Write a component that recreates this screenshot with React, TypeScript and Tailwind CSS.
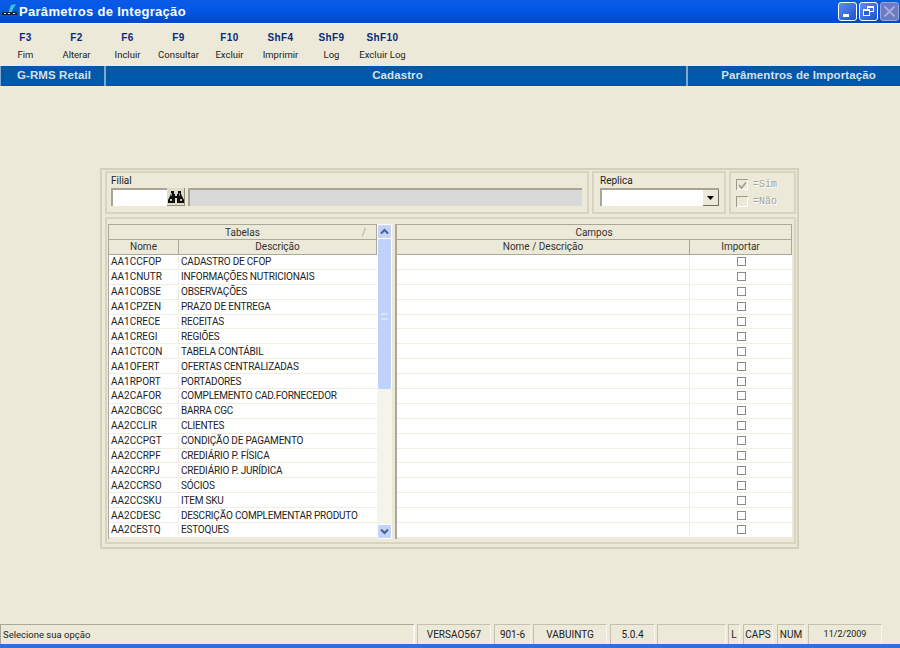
const sans = "font-['Roboto','Liberation_Sans',Arial,sans-serif]"

const keys = [
  ['F3', 'Fim'],
  ['F2', 'Alterar'],
  ['F6', 'Incluir'],
  ['F9', 'Consultar'],
  ['F10', 'Excluir'],
  ['ShF4', 'Imprimir'],
  ['ShF9', 'Log'],
  ['ShF10', 'Excluir Log'],
]

const rows = [
  ['AA1CCFOP', 'CADASTRO DE CFOP'],
  ['AA1CNUTR', 'INFORMAÇÕES NUTRICIONAIS'],
  ['AA1COBSE', 'OBSERVAÇÕES'],
  ['AA1CPZEN', 'PRAZO DE ENTREGA'],
  ['AA1CRECE', 'RECEITAS'],
  ['AA1CREGI', 'REGIÕES'],
  ['AA1CTCON', 'TABELA CONTÁBIL'],
  ['AA1OFERT', 'OFERTAS CENTRALIZADAS'],
  ['AA1RPORT', 'PORTADORES'],
  ['AA2CAFOR', 'COMPLEMENTO CAD.FORNECEDOR'],
  ['AA2CBCGC', 'BARRA CGC'],
  ['AA2CCLIR', 'CLIENTES'],
  ['AA2CCPGT', 'CONDIÇÃO DE PAGAMENTO'],
  ['AA2CCRPF', 'CREDIÁRIO P. FÍSICA'],
  ['AA2CCRPJ', 'CREDIÁRIO P. JURÍDICA'],
  ['AA2CCRSO', 'SÓCIOS'],
  ['AA2CCSKU', 'ITEM SKU'],
  ['AA2CDESC', 'DESCRIÇÃO COMPLEMENTAR PRODUTO'],
  ['AA2CESTQ', 'ESTOQUES'],
]

const statusCells: [string, string][] = [
  ['VERSAO567', 'w-[74px] ml-[2px]'],
  ['901-6', 'w-[37px] ml-[3px]'],
  ['VABUINTG', 'w-[74px] ml-[2px]'],
  ['5.0.4', 'w-[45px] ml-[3px]'],
  ['', 'w-[69px] ml-[2px]'],
  ['L', 'w-[12px] ml-[2px]'],
  ['CAPS', 'w-[30px] ml-[3px]'],
  ['NUM', 'w-[28px] ml-[4px]'],
  ['11/2/2009', 'w-[74px] ml-[3px] text-[9px]'],
]

function WinButton({ kind }: { kind: 'min' | 'max' | 'close' }) {
  if (kind === 'close') {
    return (
      <div className="w-[19px] h-[19px] rounded-[3px] border border-[#9aa6d8] bg-[#6f7bc0] flex items-center justify-center">
        <svg width="13" height="13" viewBox="0 0 13 13">
          <path d="M1.5 1.5l10 10M11.5 1.5l-10 10" stroke="#a4acd8" strokeWidth="2" />
        </svg>
      </div>
    )
  }
  return (
    <div className="w-[19px] h-[19px] rounded-[3px] border border-white bg-gradient-to-br from-[#5f8cf0] to-[#1f4fd0] flex items-center justify-center">
      {kind === 'min' ? (
        <svg width="13" height="13" viewBox="0 0 13 13">
          <rect x="2" y="9" width="6" height="3" fill="#fff" />
        </svg>
      ) : (
        <svg width="13" height="13" viewBox="0 0 13 13" fill="none" stroke="#fff">
          <rect x="5.5" y="1.5" width="6" height="5" />
          <path d="M5.5 2.5h6" />
          <rect x="1.5" y="4.5" width="6" height="6" fill="#2f5fd8" />
          <path d="M1.5 5.5h6" />
        </svg>
      )}
    </div>
  )
}

function Binoculars() {
  return (
    <svg width="16" height="14" viewBox="0 0 16 14">
      <path d="M3 1h3v3h1v2h2V4h1V1h3v3l1 2 2 4v3H9V8H7v5H0v-3l2-4 1-2z" fill="#111" />
      <rect x="3" y="3" width="1" height="3" fill="#8a8a80" />
      <rect x="11" y="3" width="1" height="3" fill="#8a8a80" />
      <rect x="2" y="9" width="2" height="2" fill="#c8c4b4" />
      <rect x="12" y="9" width="2" height="2" fill="#c8c4b4" />
    </svg>
  )
}

function ScrollButton({ up }: { up?: boolean }) {
  return (
    <div className="h-[15px] w-full rounded-[2px] border border-white bg-[#c3d3fb] flex items-center justify-center shrink-0">
      <svg width="9" height="7" viewBox="0 0 9 7" fill="none" stroke="#4d6185" strokeWidth="2">
        <path d={up ? 'M1 5.5l3.5-3.5 3.5 3.5' : 'M1 1.5l3.5 3.5 3.5-3.5'} />
      </svg>
    </div>
  )
}

function HeaderCell({ children, className = '' }: { children?: React.ReactNode; className?: string }) {
  return (
    <div className={`h-[15px] flex items-center justify-center bg-[#ece9d8] border-b border-r border-[#aca899] text-[10px] leading-none text-[#333] ${className}`}>
      {children}
    </div>
  )
}

function DisabledCheck({ checked, label }: { checked?: boolean; label: string }) {
  return (
    <div className="flex items-center gap-[5px]">
      <div className="w-[12px] h-[11px] border-l border-t border-[#9d9a8c] bg-[#ece9d8] shadow-[inset_-1px_-1px_0_#fff] flex items-center justify-center">
        {checked && (
          <svg width="9" height="9" viewBox="0 0 9 9" fill="none" stroke="#9d9a8c" strokeWidth="1.5">
            <path d="M1 4l2.5 3L8 1.5" />
          </svg>
        )}
      </div>
      <span className="font-['Liberation_Mono',monospace] text-[10px] leading-none text-[#a8a596] [text-shadow:1px_1px_0_#fff]">{label}</span>
    </div>
  )
}

export default function App() {
  return (
    <div className={`${sans} w-[900px] h-[648px] bg-[#ece9d8] flex flex-col overflow-hidden text-black`}>
      {/* title bar */}
      <div className="h-[23px] shrink-0 bg-gradient-to-b from-[#0a5ce6] via-[#0256e4] to-[#0347c8] flex items-center pl-[2px] pr-[1px]">
        <svg width="16" height="15" viewBox="0 0 16 15" className="shrink-0">
          <path d="M9 1l5-1-3 5-2 5H6z" fill="#35c8d8" />
          <rect x="0" y="8" width="15" height="3" fill="#10204a" />
          <rect x="2" y="9" width="2" height="1" fill="#e8e8e8" />
          <rect x="6" y="9" width="2" height="1" fill="#e8e8e8" />
          <rect x="11" y="9" width="2" height="1" fill="#e8e8e8" />
        </svg>
        <span className="ml-[1px] text-white font-bold text-[13px] tracking-[0.3px] font-['Liberation_Sans',Arial,sans-serif]">Parâmetros de Integração</span>
        <div className="ml-auto flex gap-[2px]">
          <WinButton kind="min" />
          <WinButton kind="max" />
          <WinButton kind="close" />
        </div>
      </div>
      <div className="h-px bg-[#f8f6ee] shrink-0" />

      {/* toolbar */}
      <div className="h-[42px] shrink-0 flex pt-[8px]">
        {keys.map(([key, label]) => (
          <div key={key} className="w-[51px] flex flex-col items-center">
            <span className="font-['Liberation_Sans',Arial,sans-serif] text-[10px] leading-[12px] font-bold tracking-[0.4px] text-[#0a2a78]">{key}</span>
            <span className="mt-[5px] text-[9.5px] leading-[12px] text-[#222] whitespace-nowrap">{label}</span>
          </div>
        ))}
      </div>

      {/* section bar */}
      <div className="h-[20px] shrink-0 bg-[#0058a8] flex font-['Liberation_Sans',Arial,sans-serif] text-[11.5px] font-bold tracking-[0.1px] text-[#d6e0ea]">
        <div className="w-[106px] pl-[3px] flex items-center justify-center border-r-2 border-[#7fa8d0] border-l border-l-[#7fa8d0]">G-RMS Retail</div>
        <div className="w-[582px] pl-[3px] flex items-center justify-center border-r-2 border-[#7fa8d0]">Cadastro</div>
        <div className="flex-1 pl-[9px] flex items-center justify-center">Parâmentros de Importação</div>
      </div>

      {/* main panel */}
      <div className="mt-[82px] ml-[100px] w-[699px] h-[381px] shrink-0 border-2 border-[#d4d0bc] pl-[3px] pr-[1px] pt-[1px]">
        <div className="flex h-[43px]">
          <div className="w-[484px] border-2 border-[#d8d4c2] pl-[4px] pt-[2px]">
            <div className="text-[10px] leading-[12px] text-[#222]">Filial</div>
            <div className="mt-[1px] flex items-center">
              <div className="w-[56px] h-[18px] bg-white border-l-2 border-t-2 border-[#a8a594]" />
              <div className="w-[18px] h-[18px] flex items-center justify-center bg-[#e0dccb] border-r border-b border-[#8f8c7c]">
                <Binoculars />
              </div>
              <div className="ml-[3px] w-[394px] h-[18px] bg-[#d9d9d9] border-l-2 border-t-2 border-[#a8a594]" />
            </div>
          </div>
          <div className="ml-[3px] w-[134px] border-2 border-[#d8d4c2] pl-[6px] pt-[2px]">
            <div className="text-[10px] leading-[12px] text-[#222]">Replica</div>
            <div className="mt-[1px] w-[119px] h-[18px] bg-white border-l-2 border-t-2 border-[#a8a594] flex justify-end">
              <div className="w-[16px] h-[16px] bg-[#ece9d8] border-r border-b border-[#716f64] flex items-center justify-center">
                <svg width="7" height="4" viewBox="0 0 7 4"><path d="M0 0h7L3.5 4z" fill="#000" /></svg>
              </div>
            </div>
          </div>
          <div className="ml-[3px] w-[67px] border-2 border-[#d8d4c2] pl-[5px] pt-[6px] flex flex-col gap-[6px]">
            <DisabledCheck checked label="=Sim" />
            <DisabledCheck label="=Não" />
          </div>
        </div>

        <div className="mt-[3px] w-[691px] h-[327px] border-2 border-[#d8d4c2] pl-[1px] pt-[5px] flex">
          {/* left grid */}
          <div className="w-[269px] h-[315px] border-l border-t border-[#aca899]">
            <HeaderCell className="relative pt-[1px]">
              Tabelas
              <span className="absolute right-[10px] text-[10px] text-[#aca899]">/</span>
            </HeaderCell>
            <div className="flex">
              <HeaderCell className="w-[70px]">Nome</HeaderCell>
              <HeaderCell className="flex-1">Descrição</HeaderCell>
            </div>
            {rows.map(([code, desc]) => (
              <div key={code} className="flex h-[14.9px] border-b border-[#f0eee2] bg-white text-[10px] leading-none text-[#222] pt-[1px]">
                <div className="w-[70px] pl-[2px] flex items-center border-r border-[#f0eee2]">{code}</div>
                <div className="flex-1 pl-[2px] flex items-center whitespace-nowrap tracking-[-0.2px]">{desc}</div>
              </div>
            ))}
          </div>

          {/* scrollbar */}
          <div className="w-[15px] h-[315px] bg-[#f4f3ec] flex flex-col">
            <ScrollButton up />
            <div className="h-[150px] w-full bg-[#c0d2fb] border-x border-white rounded-[2px] flex items-center justify-center shrink-0 pt-[4px]">
              <div className="w-[7px] h-[7px] border-y-2 border-[#d9e4fd]" />
            </div>
            <div className="flex-1" />
            <ScrollButton />
          </div>

          {/* right grid */}
          <div className="ml-[3px] w-[397px] h-[315px] border-l-2 border-t border-[#aca899]">
            <HeaderCell className="pt-[1px]">Campos</HeaderCell>
            <div className="flex">
              <HeaderCell className="flex-1">Nome / Descrição</HeaderCell>
              <HeaderCell className="w-[102px]">Importar</HeaderCell>
            </div>
            {rows.map(([code]) => (
              <div key={code} className="flex h-[14.9px] border-b border-[#f0eee2] bg-white">
                <div className="flex-1 border-r border-[#f0eee2]" />
                <div className="w-[102px] flex items-center justify-center">
                  <div className="w-[9px] h-[9px] border border-[#8a8a8a] bg-white" />
                </div>
              </div>
            ))}
          </div>
        </div>
      </div>

      {/* status bar */}
      <div className="mt-auto h-[20px] shrink-0 flex text-[10px] leading-none text-[#222]">
        <div className="w-[415px] border-t border-l border-[#aca899] border-r-2 border-r-[#f8f6ee] flex items-center pl-[2px] text-[9.5px]">Selecione sua opção</div>
        {statusCells.map(([text, cls], i) => (
          <div key={i} className={`${cls} border-t border-l border-[#c4c1b0] border-r border-r-[#f8f6ee] flex items-center justify-center`}>
            {text}
          </div>
        ))}
      </div>
      <div className="h-[4px] shrink-0 bg-[#2f71d8]" />
    </div>
  )
}
